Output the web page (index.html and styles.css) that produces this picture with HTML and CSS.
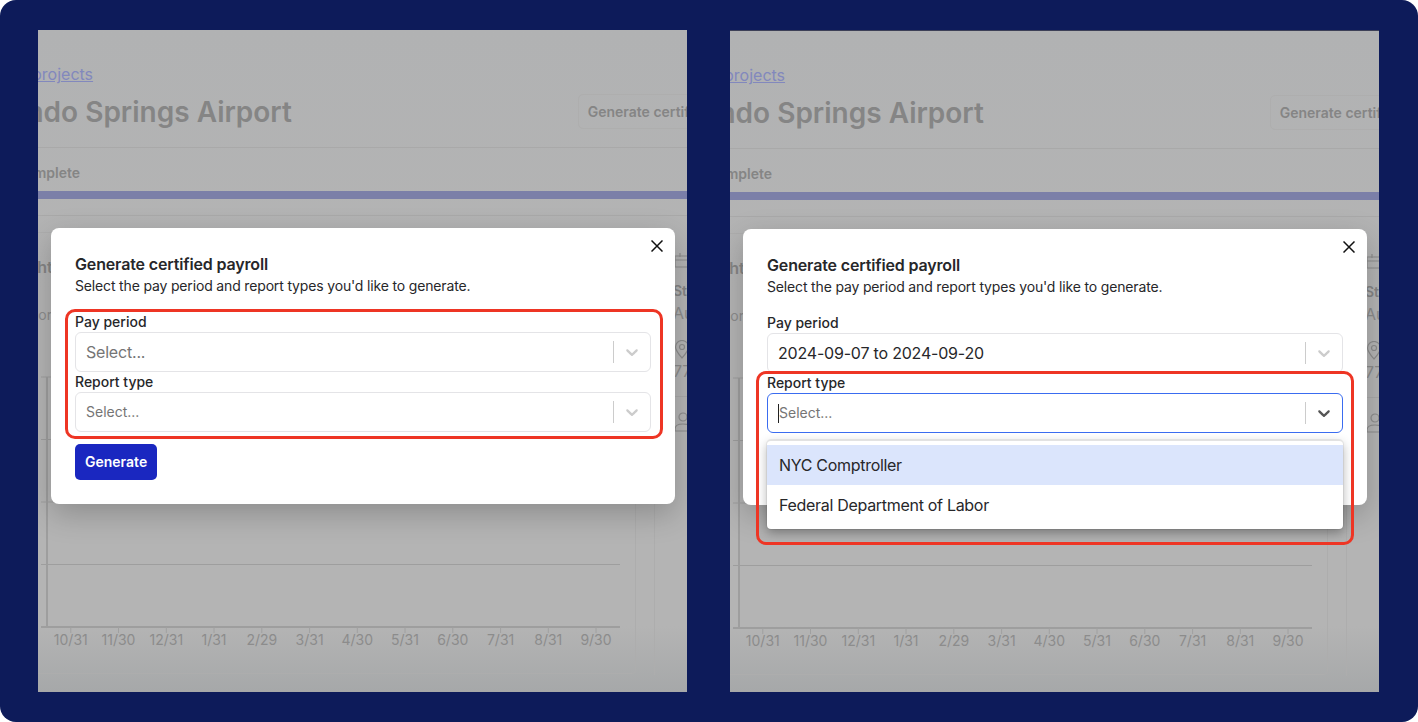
FILE: index.html
```html
<!DOCTYPE html>
<html lang="en">

<head>
    <meta charset="UTF-8">
    <title>Generate certified payroll</title>
    <link rel="stylesheet" href="styles.css">
</head>

<body>
    <div class="frame">

        <!-- left shot: both selects empty -->
        <div class="shot">
            <div class="page">
                <a class="back-link">Back to projects</a>
                <div class="title-row">
                    <h1 class="page-title">Orlando Springs Airport</h1>
                    <div class="ghost-button">Generate certified payroll</div>
                </div>
                <div class="progress-label">100% complete</div>
                <div class="progress-bar"></div>
                <div class="cards">
                    <div class="card card-chart">
                        <div class="card-heading">Weight</div>
                        <div class="card-sub">Labor</div>
                        <svg class="chart" width="590" height="290" viewBox="0 0 590 290">
                            <path class="grid" d="M0 7H579M0 69.500H579M0 132H579M0 194.500H579" />
                            <path class="axis" d="M6 7V257M0 257H579" />
                            <path class="tick" d="M29.800 257v6M77.500 257v6M125.300 257v6M173 257v6M220.800 257v6M268.600 257v6M316.300 257v6M364 257v6M411.800 257v6M459.600 257v6M507.300 257v6M555 257v6" />
                            <text x="29.800" y="275">10/31</text>
                            <text x="77.500" y="275">11/30</text>
                            <text x="125.300" y="275">12/31</text>
                            <text x="173" y="275">1/31</text>
                            <text x="220.800" y="275">2/29</text>
                            <text x="268.600" y="275">3/31</text>
                            <text x="316.300" y="275">4/30</text>
                            <text x="364" y="275">5/31</text>
                            <text x="411.800" y="275">6/30</text>
                            <text x="459.600" y="275">7/31</text>
                            <text x="507.300" y="275">8/31</text>
                            <text x="555" y="275">9/30</text>
                        </svg>
                    </div>
                    <div class="card card-info">
                        <svg class="info-icon" width="24" height="16" viewBox="0 0 24 16"><path d="M2 4h20v11H2zM2 8h20M7 1v4M17 1v4" /></svg>
                        <div class="info-label">Start date</div>
                        <div class="info-value">Aug 1, 2023</div>
                        <svg class="info-icon icon-pin" width="16" height="19" viewBox="0 0 16 19"><path d="M8 18C4 13 1.500 10.500 1.500 7a6.500 6.500 0 0 1 13 0c0 3.500-2.500 6-6.500 11z" /><circle cx="8" cy="7" r="2.500" /></svg>
                        <div class="info-value">77 Main Street</div>
                        <div class="info-line"></div>
                        <svg class="info-icon icon-person" width="18" height="20" viewBox="0 0 18 20"><circle cx="9" cy="5" r="4" /><path d="M1 19v-2c0-3 3-5 8-5s8 2 8 5v2z" /></svg>
                    </div>
                </div>
            </div>

            <div class="modal">
                <svg class="modal-close" width="12" height="12" viewBox="0 0 12 12"><path d="M0.500 0.500L11.500 11.500M11.500 0.500L0.500 11.500" /></svg>
                <h2 class="modal-title">Generate certified payroll</h2>
                <p class="modal-text">Select the pay period and report types you'd like to generate.</p>
                <div class="field">
                    <div class="field-label">Pay period</div>
                    <div class="select">
                        <span class="select-text select-placeholder">Select...</span>
                        <span class="select-sep"></span>
                        <svg class="select-arrow" width="20" height="20" viewBox="0 0 20 20"><path d="M4.516 7.548c0.436-0.446 1.043-0.481 1.576 0l3.908 3.747 3.908-3.747c0.533-0.481 1.141-0.446 1.574 0 0.436 0.445 0.408 1.197 0 1.615-0.406 0.418-4.695 4.502-4.695 4.502-0.217 0.223-0.502 0.335-0.787 0.335s-0.57-0.112-0.789-0.335c0 0-4.287-4.084-4.695-4.502s-0.436-1.17 0-1.615z" /></svg>
                    </div>
                </div>
                <div class="field">
                    <div class="field-label">Report type</div>
                    <div class="select">
                        <span class="select-text select-placeholder select-small">Select...</span>
                        <span class="select-sep"></span>
                        <svg class="select-arrow" width="20" height="20" viewBox="0 0 20 20"><path d="M4.516 7.548c0.436-0.446 1.043-0.481 1.576 0l3.908 3.747 3.908-3.747c0.533-0.481 1.141-0.446 1.574 0 0.436 0.445 0.408 1.197 0 1.615-0.406 0.418-4.695 4.502-4.695 4.502-0.217 0.223-0.502 0.335-0.787 0.335s-0.57-0.112-0.789-0.335c0 0-4.287-4.084-4.695-4.502s-0.436-1.17 0-1.615z" /></svg>
                    </div>
                </div>
                <button class="primary-button">Generate</button>
            </div>

            <div class="callout callout-left"></div>
        </div>

        <!-- right shot: report type menu open -->
        <div class="shot shot-right">
            <div class="page">
                <a class="back-link">Back to projects</a>
                <div class="title-row">
                    <h1 class="page-title">Orlando Springs Airport</h1>
                    <div class="ghost-button">Generate certified payroll</div>
                </div>
                <div class="progress-label">100% complete</div>
                <div class="progress-bar"></div>
                <div class="cards">
                    <div class="card card-chart">
                        <div class="card-heading">Weight</div>
                        <div class="card-sub">Labor</div>
                        <svg class="chart" width="590" height="290" viewBox="0 0 590 290">
                            <path class="grid" d="M0 7H579M0 69.500H579M0 132H579M0 194.500H579" />
                            <path class="axis" d="M6 7V257M0 257H579" />
                            <path class="tick" d="M29.800 257v6M77.500 257v6M125.300 257v6M173 257v6M220.800 257v6M268.600 257v6M316.300 257v6M364 257v6M411.800 257v6M459.600 257v6M507.300 257v6M555 257v6" />
                            <text x="29.800" y="275">10/31</text>
                            <text x="77.500" y="275">11/30</text>
                            <text x="125.300" y="275">12/31</text>
                            <text x="173" y="275">1/31</text>
                            <text x="220.800" y="275">2/29</text>
                            <text x="268.600" y="275">3/31</text>
                            <text x="316.300" y="275">4/30</text>
                            <text x="364" y="275">5/31</text>
                            <text x="411.800" y="275">6/30</text>
                            <text x="459.600" y="275">7/31</text>
                            <text x="507.300" y="275">8/31</text>
                            <text x="555" y="275">9/30</text>
                        </svg>
                    </div>
                    <div class="card card-info">
                        <svg class="info-icon" width="24" height="16" viewBox="0 0 24 16"><path d="M2 4h20v11H2zM2 8h20M7 1v4M17 1v4" /></svg>
                        <div class="info-label">Start date</div>
                        <div class="info-value">Aug 1, 2023</div>
                        <svg class="info-icon icon-pin" width="16" height="19" viewBox="0 0 16 19"><path d="M8 18C4 13 1.500 10.500 1.500 7a6.500 6.500 0 0 1 13 0c0 3.500-2.500 6-6.500 11z" /><circle cx="8" cy="7" r="2.500" /></svg>
                        <div class="info-value">77 Main Street</div>
                        <div class="info-line"></div>
                        <svg class="info-icon icon-person" width="18" height="20" viewBox="0 0 18 20"><circle cx="9" cy="5" r="4" /><path d="M1 19v-2c0-3 3-5 8-5s8 2 8 5v2z" /></svg>
                    </div>
                </div>
            </div>

            <div class="modal">
                <svg class="modal-close" width="12" height="12" viewBox="0 0 12 12"><path d="M0.500 0.500L11.500 11.500M11.500 0.500L0.500 11.500" /></svg>
                <h2 class="modal-title">Generate certified payroll</h2>
                <p class="modal-text">Select the pay period and report types you'd like to generate.</p>
                <div class="field">
                    <div class="field-label">Pay period</div>
                    <div class="select">
                        <span class="select-text">2024-09-07 to 2024-09-20</span>
                        <span class="select-sep"></span>
                        <svg class="select-arrow" width="20" height="20" viewBox="0 0 20 20"><path d="M4.516 7.548c0.436-0.446 1.043-0.481 1.576 0l3.908 3.747 3.908-3.747c0.533-0.481 1.141-0.446 1.574 0 0.436 0.445 0.408 1.197 0 1.615-0.406 0.418-4.695 4.502-4.695 4.502-0.217 0.223-0.502 0.335-0.787 0.335s-0.57-0.112-0.789-0.335c0 0-4.287-4.084-4.695-4.502s-0.436-1.17 0-1.615z" /></svg>
                    </div>
                </div>
                <div class="field">
                    <div class="field-label">Report type</div>
                    <div class="select select-focus">
                        <span class="select-text select-placeholder select-small">Select...</span>
                        <span class="select-sep"></span>
                        <svg class="select-arrow" width="20" height="20" viewBox="0 0 20 20"><path d="M4.516 7.548c0.436-0.446 1.043-0.481 1.576 0l3.908 3.747 3.908-3.747c0.533-0.481 1.141-0.446 1.574 0 0.436 0.445 0.408 1.197 0 1.615-0.406 0.418-4.695 4.502-4.695 4.502-0.217 0.223-0.502 0.335-0.787 0.335s-0.57-0.112-0.789-0.335c0 0-4.287-4.084-4.695-4.502s-0.436-1.17 0-1.615z" /></svg>
                    </div>
                    <div class="menu">
                        <div class="menu-item menu-item-active">NYC Comptroller</div>
                        <div class="menu-item">Federal Department of Labor</div>
                    </div>
                </div>
                <button class="primary-button">Generate</button>
            </div>

            <div class="callout callout-right"></div>
        </div>

    </div>
</body>

</html>
```

FILE: styles.css
```css
* {
    box-sizing: border-box;
}

body {
    margin: 0;
    background: #fff;
    font-family: Inter, "Liberation Sans", sans-serif;
}

.frame {
    display: flex;
    gap: 43px;
    width: 1418px;
    height: 722px;
    padding: 30px 39px 30px 38px;
    background: #0d1b5a;
    border-radius: 16px;
}

/* one photographed browser window */
.shot {
    position: relative;
    width: 649px;
    height: 662px;
    overflow: hidden;
    background: linear-gradient(#b1b2b3 0, #b4b4b4 40%, #b4b4b4 90%, #a6a8a9 100%);
}

.shot-right {
    border-top: 1px solid #3d4057;
}

/* page under the backdrop, scrolled sideways */
.page {
    width: 800px;
    margin-left: -68px;
    padding-top: 34px;
}

.back-link {
    display: block;
    padding-left: 1px;
    font-size: 16px;
    line-height: 20px;
    color: #8288bd;
    text-decoration: underline;
}

.title-row {
    display: flex;
    justify-content: space-between;
    align-items: center;
    margin-top: 10px;
    padding-bottom: 18px;
    border-bottom: 1px solid #a9a9a9;
}

.page-title {
    margin: 2px 0 0;
    font-size: 28px;
    font-weight: 600;
    line-height: 33px;
    color: #858585;
}

.ghost-button {
    height: 35px;
    padding: 0 9px;
    border: 1px solid #aeaeae;
    border-radius: 5px;
    font-size: 14px;
    font-weight: 600;
    line-height: 33px;
    color: #858585;
}

.progress-label {
    margin-top: 15px;
    padding-left: 5px;
    font-size: 14px;
    font-weight: 600;
    line-height: 20px;
    color: #858585;
}

.progress-bar {
    height: 8px;
    margin-top: 8px;
    background: #7b7fa8;
}

.cards {
    display: flex;
    gap: 18px;
    height: 460px;
    margin-top: 16px;
    padding-top: 16px;
    border-top: 1px solid #a9a9a9;
}

.card {
    border: 1px solid #adadad;
    border-radius: 4px;
}

.card-chart {
    width: 666px;
    height: 442px;
    flex: none;
    padding-left: 70px;
}

.card-heading {
    margin-top: 24px;
    margin-left: -43px;
    font-size: 16px;
    font-weight: 600;
    line-height: 20px;
    color: #858585;
}

.card-sub {
    margin-top: 28px;
    margin-left: -27px;
    font-size: 14px;
    line-height: 20px;
    color: #8c8c8c;
}

.chart {
    display: block;
    margin-top: 45px;
    overflow: visible;
}

.chart path {
    fill: none;
}

.chart .grid {
    stroke: #9e9e9e;
    stroke-width: 1;
}

.chart .axis {
    stroke: #9e9e9e;
    stroke-width: 2;
}

.chart .tick {
    stroke: #a0a0a0;
    stroke-width: 1;
}

.chart text {
    font-size: 14px;
    fill: #8c8c8c;
    text-anchor: middle;
}

.card-info {
    flex: 1;
    padding: 20px 0 0 18px;
    border-width: 0 0 0 1px;
    border-radius: 0;
    white-space: nowrap;
}

.info-icon {
    display: block;
    fill: none;
    stroke: #8c8c8c;
    stroke-width: 1.2;
}

.icon-pin {
    margin-top: 17px;
    margin-left: 1px;
}

.icon-person {
    margin-left: 1px;
}

.info-label {
    margin-top: 13px;
    font-size: 14px;
    font-weight: 600;
    line-height: 20px;
    color: #858585;
}

.info-value {
    margin-top: 2px;
    font-size: 16px;
    line-height: 20px;
    color: #8c8c8c;
}

.info-line {
    height: 1px;
    margin: 15px 0;
    background: #a9a9a9;
}

.modal {
    position: absolute;
    left: 13px;
    top: 198px;
    width: 624px;
    padding: 24px;
    background: #fff;
    border-radius: 8px;
    box-shadow: 0 10px 30px rgba(0, 0, 0, 0.22);
    color: #27272a;
}

.modal-close {
    position: absolute;
    top: 12px;
    right: 12px;
    stroke: #111;
    stroke-width: 1.5;
}

.modal-title {
    margin: 0;
    font-size: 16px;
    font-weight: 600;
    line-height: 24px;
    letter-spacing: -0.15px;
}

.modal-text {
    margin: 0 0 16px;
    font-size: 14px;
    line-height: 20px;
    letter-spacing: -0.16px;
}

.field {
    position: relative;
}

.field-label {
    font-size: 14px;
    font-weight: 500;
    line-height: 20px;
}

.select {
    display: flex;
    align-items: center;
    height: 40px;
    padding-left: 10px;
    border: 1px solid #e4e4e7;
    border-radius: 6px;
    background: #fff;
}

.select-focus {
    border-color: #3a6cf0;
}

.select-text {
    flex: 1;
    font-size: 16px;
    letter-spacing: -0.2px;
}

.select-placeholder {
    color: #757575;
}

.select-small {
    padding-bottom: 2px;
    font-size: 14px;
    letter-spacing: 0;
}

.select-sep {
    width: 1px;
    height: 22px;
    background: #ccc;
}

.select-arrow {
    margin: 0 8px;
    fill: #ccc;
}

.select-focus .select-arrow {
    fill: #555;
}

.select-focus .select-text {
    border-left: 1px solid #222;
    line-height: 17px;
}

.menu {
    position: absolute;
    z-index: 2;
    left: 0;
    right: 0;
    top: 67px;
    padding: 4px 0;
    background: #fff;
    border-top: 1px solid #e2e2e2;
    border-radius: 4px;
    box-shadow: 0 0 0 1px rgba(0, 0, 0, 0.06), 0 4px 11px rgba(0, 0, 0, 0.3);
}

.menu-item {
    height: 40px;
    padding: 0 12px;
    font-size: 16px;
    line-height: 40px;
    letter-spacing: -0.3px;
}

.menu-item-active {
    background: #dbe5fc;
}

.primary-button {
    display: block;
    height: 36px;
    margin-top: 12px;
    padding: 0 10px 2px;
    border: 0;
    border-radius: 5px;
    background: #1a27c0;
    color: #fff;
    font-family: inherit;
    font-size: 14px;
    font-weight: 600;
}

/* red annotation boxes drawn on top of the screenshots */
.callout {
    position: absolute;
    z-index: 3;
    width: 598px;
    border: 3px solid #ee3524;
    border-radius: 10px;
}

.callout-left {
    left: 27px;
    top: 279px;
    height: 130px;
}

.callout-right {
    left: 26px;
    top: 340px;
    height: 174px;
}
```
